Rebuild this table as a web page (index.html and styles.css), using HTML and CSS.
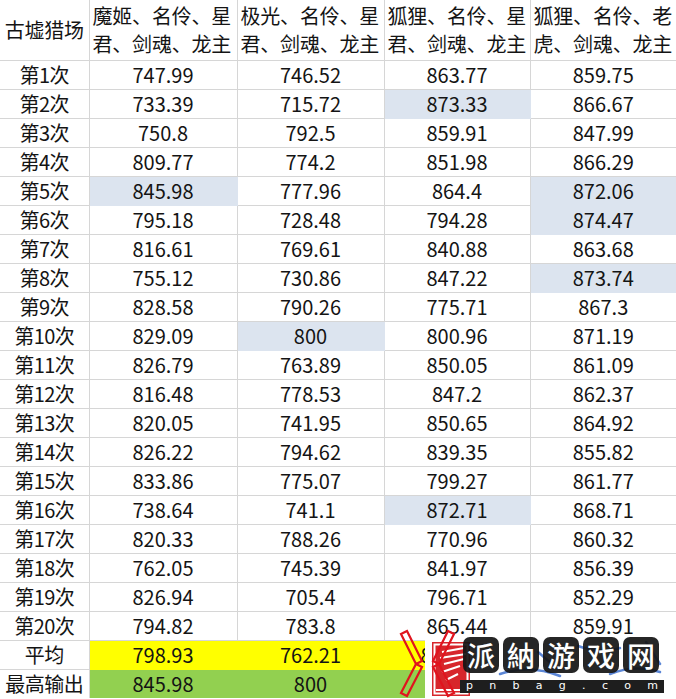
FILE: index.html
```html
<!DOCTYPE html>
<html lang="zh">
<head>
<meta charset="utf-8">
<link rel="stylesheet" href="styles.css">
</head>
<body>
<div class="sheet">
<table class="grid">
<colgroup><col class="c1"><col class="c2"><col class="c3"><col class="c4"><col class="c5"></colgroup>
<tr class="head">
<th class="corner">古墟猎场</th>
<th>魔姬、名伶、星<br>君、剑魂、龙主</th>
<th>极光、名伶、星<br>君、剑魂、龙主</th>
<th>狐狸、名伶、星<br>君、剑魂、龙主</th>
<th>狐狸、名伶、老<br>虎、剑魂、龙主</th>
</tr>
<tr><td class="lbl">第1次</td><td>747.99</td><td>746.52</td><td>863.77</td><td>859.75</td></tr>
<tr><td class="lbl">第2次</td><td>733.39</td><td>715.72</td><td class="hl">873.33</td><td>866.67</td></tr>
<tr><td class="lbl">第3次</td><td>750.8</td><td>792.5</td><td>859.91</td><td>847.99</td></tr>
<tr><td class="lbl">第4次</td><td>809.77</td><td>774.2</td><td>851.98</td><td>866.29</td></tr>
<tr><td class="lbl">第5次</td><td class="hl">845.98</td><td>777.96</td><td>864.4</td><td class="hl">872.06</td></tr>
<tr><td class="lbl">第6次</td><td>795.18</td><td>728.48</td><td>794.28</td><td class="hl">874.47</td></tr>
<tr><td class="lbl">第7次</td><td>816.61</td><td>769.61</td><td>840.88</td><td>863.68</td></tr>
<tr><td class="lbl">第8次</td><td>755.12</td><td>730.86</td><td>847.22</td><td class="hl">873.74</td></tr>
<tr><td class="lbl">第9次</td><td>828.58</td><td>790.26</td><td>775.71</td><td>867.3</td></tr>
<tr><td class="lbl">第10次</td><td>829.09</td><td class="hl">800</td><td>800.96</td><td>871.19</td></tr>
<tr><td class="lbl">第11次</td><td>826.79</td><td>763.89</td><td>850.05</td><td>861.09</td></tr>
<tr><td class="lbl">第12次</td><td>816.48</td><td>778.53</td><td>847.2</td><td>862.37</td></tr>
<tr><td class="lbl">第13次</td><td>820.05</td><td>741.95</td><td>850.65</td><td>864.92</td></tr>
<tr><td class="lbl">第14次</td><td>826.22</td><td>794.62</td><td>839.35</td><td>855.82</td></tr>
<tr><td class="lbl">第15次</td><td>833.86</td><td>775.07</td><td>799.27</td><td>861.77</td></tr>
<tr><td class="lbl">第16次</td><td>738.64</td><td>741.1</td><td class="hl">872.71</td><td>868.71</td></tr>
<tr><td class="lbl">第17次</td><td>820.33</td><td>788.26</td><td>770.96</td><td>860.32</td></tr>
<tr><td class="lbl">第18次</td><td>762.05</td><td>745.39</td><td>841.97</td><td>856.39</td></tr>
<tr><td class="lbl">第19次</td><td>826.94</td><td>705.4</td><td>796.71</td><td>852.29</td></tr>
<tr><td class="lbl">第20次</td><td>794.82</td><td>783.8</td><td>865.44</td><td>859.91</td></tr>
<tr class="avg"><td class="lbl">平均</td><td>798.93</td><td>762.21</td><td class="part">8</td><td></td></tr>
<tr class="max"><td class="lbl">最高输出</td><td>845.98</td><td>800</td><td></td><td></td></tr>
</table>

<div class="watermark">
  <div class="wm-bg"></div>
  <svg class="wm-logo" width="80" height="72" viewBox="0 0 80 72">
    <g fill="none" stroke="#e0141e" stroke-width="2.2" stroke-linejoin="miter">
      <polygon points="3,6 9,3 24,33 18,36"/>
      <polygon points="18,36 24,39 9,68 3,65"/>
    </g>
    <rect x="34" y="14" width="38" height="54" fill="#d7262b"/>
    <g stroke="#fff" stroke-width="2" fill="none">
      <path d="M44 24 L66 20"/>
      <path d="M42 30 L68 26"/>
      <path d="M46 36 L66 31"/>
      <path d="M44 44 L62 38"/>
      <path d="M48 52 L60 46"/>
      <path d="M38 62 L70 62"/>
      <rect x="36.5" y="16.5" width="33" height="49"/>
    </g>
    <g fill="none" stroke="#e0141e" stroke-width="2.2">
      <polygon points="56,6 50,3 35,33 41,36"/>
      <polygon points="41,36 35,39 50,68 56,65"/>
    </g>
  </svg>
  <svg class="wm-blue" width="210" height="50" viewBox="0 0 210 50">
    <g fill="none" stroke="#5b86d6" stroke-width="2.5" stroke-linecap="round">
      <path d="M40 40 Q70 30 100 42"/>
      <path d="M118 12 Q140 20 160 14"/>
      <path d="M150 40 Q175 30 200 38"/>
      <path d="M78 18 L92 30"/>
      <path d="M186 8 L200 30"/>
    </g>
  </svg>
  <div class="wm-chars">
    <span class="wm-ch">派</span>
    <span class="wm-ch">納</span>
    <span class="wm-ch">游</span>
    <span class="wm-ch">戏</span>
    <span class="wm-ch">网</span>
  </div>
  <div class="wm-bar"><span>p</span><span>n</span><span>b</span><span>a</span><span>g</span><span>.</span><span>c</span><span>o</span><span>m</span></div>
</div>
</div>
</body>
</html>
```
FILE: styles.css
```css
html, body {
  margin: 0;
  padding: 0;
  background: #ffffff;
}
body {
  width: 676px;
  height: 699px;
  overflow: hidden;
  font-family: "Noto Sans CJK SC", "Noto Sans", sans-serif;
  color: #141414;
}
.sheet {
  position: relative;
  width: 676px;
  height: 699px;
}
.grid {
  border-collapse: collapse;
  table-layout: fixed;
  width: 676px;
}
.c1 { width: 89px; }
.c2 { width: 148px; }
.c3 { width: 147px; }
.c4 { width: 146px; }
.c5 { width: 146px; }

.grid th, .grid td {
  border: 1px solid #d6d6d6;
  padding: 0;
  font-size: 20px;
  font-weight: 400;
  text-align: center;
  vertical-align: middle;
  white-space: nowrap;
  overflow: hidden;
}
.grid tr:first-child th { border-top: none; }
.grid th:first-child, .grid td:first-child { border-left: none; }
.grid th:last-child, .grid td:last-child { border-right: none; }

.grid tr { height: 29px; }
.grid td { height: 28px; line-height: 28px; }
.grid tr.head { height: 60px; }
.grid th {
  height: 59px;
  line-height: 28px;
  text-align: left;
  padding-left: 3px;
  letter-spacing: -0.2px;
}
.grid th.corner {
  text-align: center;
  padding-left: 0;
}
.grid td.lbl { letter-spacing: -0.5px; }

.grid td.hl {
  background: #dce4ef;
  border-color: #dce4ef;
}
.grid tr.avg td:not(.lbl) {
  background: #ffff00;
  border-color: #ffff00;
}
.grid tr.avg td.part {
  text-align: left;
  padding-left: 36px;
}
.grid tr.max td:not(.lbl) {
  background: #92d050;
  border-color: #92d050;
}
.grid tr.max td { border-bottom: none; }

/* watermark overlay */
.watermark {
  position: absolute;
  left: 396px;
  top: 626px;
  width: 280px;
  height: 73px;
}
.wm-bg {
  position: absolute;
  left: 29px;
  top: 12px;
  width: 251px;
  height: 61px;
  background: #ffffff;
}
.wm-logo {
  position: absolute;
  left: 2px;
  top: 2px;
}
.wm-blue {
  position: absolute;
  left: 64px;
  top: 8px;
}
.wm-chars {
  position: absolute;
  left: 67px;
  top: 11px;
  display: flex;
  gap: 4px;
}
.wm-ch {
  width: 36px;
  height: 36px;
  border-radius: 7px;
  background: rgba(20, 20, 20, 0.92);
  color: #ffffff;
  font-size: 28px;
  line-height: 36px;
  text-align: center;
  font-weight: 500;
}
.wm-bar {
  position: absolute;
  left: 64px;
  top: 54px;
  width: 204px;
  height: 13px;
  background: #1e1e1e;
  color: #ffffff;
  font-family: "DejaVu Sans", sans-serif;
  font-size: 11px;
  line-height: 12px;
  padding: 0 6px 0 6px;
  box-sizing: border-box;
  display: flex;
  justify-content: space-between;
}
```
